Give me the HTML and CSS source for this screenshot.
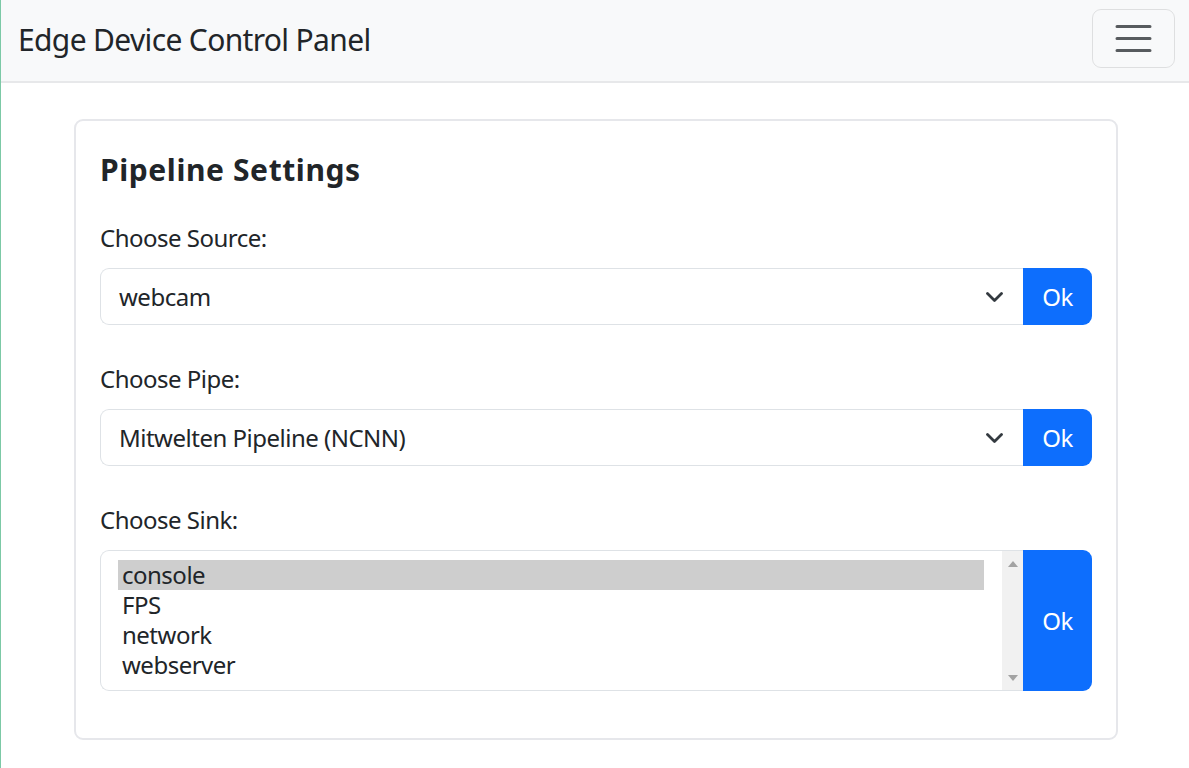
FILE: index.html
```html
<!DOCTYPE html>
<html lang="en">
<head>
<meta charset="utf-8">
<title>Edge Device Control Panel</title>
<link rel="stylesheet" href="styles.css">
</head>
<body>
<div class="page">
  <nav class="navbar">
    <span class="brand">Edge Device Control Panel</span>
    <button class="toggler" type="button" aria-label="Toggle navigation">
      <svg class="toggler-icon" viewBox="0 0 30 30" width="45" height="45">
        <path d="M4 7h22M4 15h22M4 23h22" stroke="rgba(33,37,41,0.75)" stroke-width="2" stroke-linecap="round" fill="none"/>
      </svg>
    </button>
  </nav>
  <main class="container">
    <section class="card">
      <h5 class="card-title">Pipeline Settings</h5>

      <div class="group">
        <label class="label">Choose Source:</label>
        <div class="input-group">
          <div class="select">
            <span class="select-value">webcam</span>
            <svg class="chevron" viewBox="0 0 17 10" width="17" height="10">
              <path d="M1.5 1.5 L8.5 8.5 L15.5 1.5" stroke="#343a40" stroke-width="2.8" stroke-linecap="round" stroke-linejoin="round" fill="none"/>
            </svg>
          </div>
          <button class="btn" type="button">Ok</button>
        </div>
      </div>

      <div class="group">
        <label class="label">Choose Pipe:</label>
        <div class="input-group">
          <div class="select">
            <span class="select-value">Mitwelten Pipeline (NCNN)</span>
            <svg class="chevron" viewBox="0 0 17 10" width="17" height="10">
              <path d="M1.5 1.5 L8.5 8.5 L15.5 1.5" stroke="#343a40" stroke-width="2.8" stroke-linecap="round" stroke-linejoin="round" fill="none"/>
            </svg>
          </div>
          <button class="btn" type="button">Ok</button>
        </div>
      </div>

      <div class="group last">
        <label class="label">Choose Sink:</label>
        <div class="input-group">
          <div class="listbox">
            <div class="options">
              <div class="option selected">console</div>
              <div class="option">FPS</div>
              <div class="option">network</div>
              <div class="option">webserver</div>
            </div>
            <div class="scrollbar">
              <svg class="arrow" viewBox="0 0 10 6" width="10" height="6"><path d="M0 6 L5 0 L10 6 Z" fill="#a3a3a3"/></svg>
              <svg class="arrow" viewBox="0 0 10 6" width="10" height="6"><path d="M0 0 L5 6 L10 0 Z" fill="#a3a3a3"/></svg>
            </div>
          </div>
          <button class="btn" type="button">Ok</button>
        </div>
      </div>
    </section>
  </main>
</div>
</body>
</html>
```

FILE: styles.css
```css
* { box-sizing: border-box; }

html, body {
  margin: 0;
  padding: 0;
  background: #ffffff;
}

body {
  font-family: "Noto Sans", "DejaVu Sans", sans-serif;
  color: #212529;
  font-size: 24px;
  line-height: 1.5;
  letter-spacing: -0.5px;
}

.page {
  min-height: 768px;
  border-left: 1px solid #7cc9a6;
}

.navbar {
  height: 83px;
  background: #f8f9fa;
  border-bottom: 2px solid #e7e8ea;
  display: flex;
  justify-content: space-between;
  align-items: flex-start;
  padding: 0 14px 0 17px;
}

.brand {
  align-self: center;
  font-size: 30px;
  line-height: 36px;
  color: #212529;
  margin-top: -2px;
  letter-spacing: -0.65px;
}

.toggler {
  margin-top: 9px;
  width: 83px;
  height: 59px;
  padding: 0;
  display: flex;
  align-items: center;
  justify-content: center;
  background: transparent;
  border: 1.5px solid rgba(0, 0, 0, 0.1);
  border-radius: 9px;
}

.toggler-icon { display: block; }

.container {
  padding: 36px 71px 0 73px;
}

.card {
  border: 2px solid #e6e7eb;
  border-radius: 9px;
  padding: 31px 24px 47px 24px;
}

.card-title {
  margin: 0 0 32px 0;
  font-size: 30px;
  line-height: 36px;
  font-weight: 700;
  letter-spacing: 0.6px;
}

.group {
  margin-bottom: 36px;
}

.group.last { margin-bottom: 0; }

.label {
  display: block;
  margin-bottom: 12px;
  line-height: 36px;
}

.input-group {
  display: flex;
  align-items: stretch;
}

.select {
  flex: 1;
  height: 57px;
  display: flex;
  align-items: center;
  justify-content: space-between;
  padding: 0 20px 0 18px;
  border: 1.5px solid #dee2e6;
  border-right: none;
  border-radius: 9px 0 0 9px;
  background: #fff;
}

.select-value {
  line-height: 36px;
}

.chevron { display: block; }

.btn {
  width: 69px;
  flex: none;
  background: #0d6efd;
  color: #ffffff;
  border: none;
  border-radius: 0 9px 9px 0;
  font-family: inherit;
  font-size: 24px;
  line-height: 36px;
  letter-spacing: -0.5px;
  padding: 0;
}

.listbox {
  flex: 1;
  height: 141px;
  display: flex;
  border: 1.5px solid #dee2e6;
  border-right: none;
  border-radius: 9px 0 0 9px;
  background: #fff;
  overflow: hidden;
}

.options {
  flex: 1;
  padding: 8.5px 18px 0 17px;
}

.option {
  height: 30px;
  line-height: 30px;
  padding: 0 4px;
  color: #212529;
}

.option.selected {
  background: #cecece;
}

.scrollbar {
  width: 21px;
  flex: none;
  background: #f1f1f1;
  display: flex;
  flex-direction: column;
  justify-content: space-between;
  align-items: center;
  padding: 10px 0 9px 0;
}

.arrow { display: block; }
```
